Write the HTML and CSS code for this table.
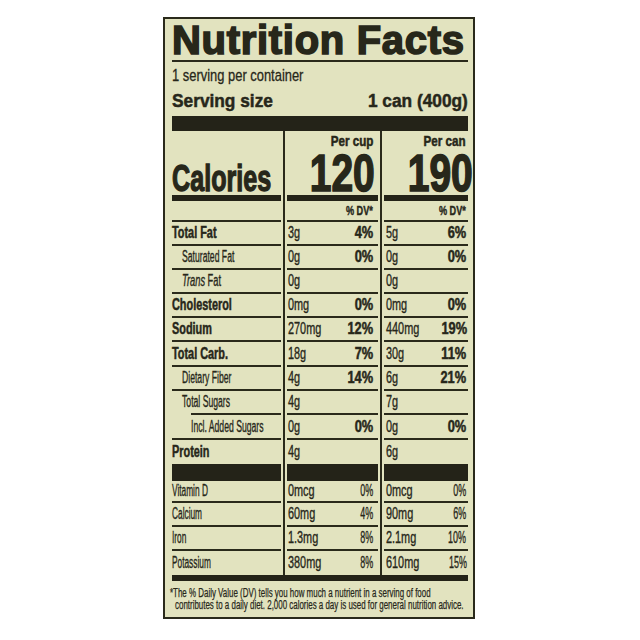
FILE: index.html
```html
<!DOCTYPE html>
<html lang="en">
<head>
<meta charset="utf-8">
<title>Nutrition Facts</title>
<link rel="stylesheet" href="styles.css">
</head>
<body>
<div class="page">
  <section class="label">
    <h1 class="title">Nutrition Facts</h1>
    <div class="servings"><span class="sx">1 serving per container</span></div>
    <div class="size"><span class="sx">Serving size</span><span class="sx r">1 can (400g)</span></div>
    <div class="bar-lg"></div>
    <div class="grid">
      <div class="vdiv d1"></div>
      <div class="vdiv d2"></div>

      <div class="cell cal"><span class="sx">Calories</span></div>
      <div class="cell head c2"><span class="sx r">Per cup</span></div>
      <div class="cell head c3"><span class="sx r">Per can</span></div>
      <div class="cell num c2"><span class="sx r">120</span></div>
      <div class="cell num c3"><span class="sx r">190</span></div>

      <div class="cell dv ln"></div>
      <div class="cell dv ln c2"><span class="sx r">% DV*</span></div>
      <div class="cell dv ln c3"><span class="sx r">% DV*</span></div>

      <div class="cell ln"><span class="sx lb">Total Fat</span></div>
      <div class="cell ln c2"><span class="sx v">3g</span><span class="sx r pb">4%</span></div>
      <div class="cell ln c3"><span class="sx v">5g</span><span class="sx r pb">6%</span></div>

      <div class="cell ln sub"><span class="sx lr">Saturated Fat</span></div>
      <div class="cell ln c2"><span class="sx v">0g</span><span class="sx r pb">0%</span></div>
      <div class="cell ln c3"><span class="sx v">0g</span><span class="sx r pb">0%</span></div>

      <div class="cell ln sub"><span class="sx lt"><i>Trans</i> Fat</span></div>
      <div class="cell ln c2"><span class="sx v">0g</span></div>
      <div class="cell ln c3"><span class="sx v">0g</span></div>

      <div class="cell ln"><span class="sx lb">Cholesterol</span></div>
      <div class="cell ln c2"><span class="sx v">0mg</span><span class="sx r pb">0%</span></div>
      <div class="cell ln c3"><span class="sx v">0mg</span><span class="sx r pb">0%</span></div>

      <div class="cell ln"><span class="sx lb">Sodium</span></div>
      <div class="cell ln c2"><span class="sx v">270mg</span><span class="sx r pb">12%</span></div>
      <div class="cell ln c3"><span class="sx v">440mg</span><span class="sx r pb">19%</span></div>

      <div class="cell ln"><span class="sx lb">Total Carb.</span></div>
      <div class="cell ln c2"><span class="sx v">18g</span><span class="sx r pb">7%</span></div>
      <div class="cell ln c3"><span class="sx v">30g</span><span class="sx r pb">11%</span></div>

      <div class="cell ln sub"><span class="sx lr">Dietary Fiber</span></div>
      <div class="cell ln c2"><span class="sx v">4g</span><span class="sx r pb">14%</span></div>
      <div class="cell ln c3"><span class="sx v">6g</span><span class="sx r pb">21%</span></div>

      <div class="cell sub ind-line"><span class="sx lr">Total Sugars</span></div>
      <div class="cell ln c2"><span class="sx v">4g</span></div>
      <div class="cell ln c3"><span class="sx v">7g</span></div>

      <div class="cell ln sub2"><span class="sx lr">Incl. Added Sugars</span></div>
      <div class="cell ln c2"><span class="sx v">0g</span><span class="sx r pb">0%</span></div>
      <div class="cell ln c3"><span class="sx v">0g</span><span class="sx r pb">0%</span></div>

      <div class="cell"><span class="sx lb">Protein</span></div>
      <div class="cell c2"><span class="sx v">4g</span></div>
      <div class="cell c3"><span class="sx v">6g</span></div>

      <div class="blk"></div>
      <div class="blk"></div>
      <div class="blk"></div>

      <div class="cell ln"><span class="sx vl">Vitamin D</span></div>
      <div class="cell ln c2"><span class="sx v">0mcg</span><span class="sx r pr">0%</span></div>
      <div class="cell ln c3"><span class="sx v">0mcg</span><span class="sx r pr">0%</span></div>

      <div class="cell ln"><span class="sx vl">Calcium</span></div>
      <div class="cell ln c2"><span class="sx v">60mg</span><span class="sx r pr">4%</span></div>
      <div class="cell ln c3"><span class="sx v">90mg</span><span class="sx r pr">6%</span></div>

      <div class="cell ln"><span class="sx vl">Iron</span></div>
      <div class="cell ln c2"><span class="sx v">1.3mg</span><span class="sx r pr">8%</span></div>
      <div class="cell ln c3"><span class="sx v">2.1mg</span><span class="sx r pr">10%</span></div>

      <div class="cell"><span class="sx vl">Potassium</span></div>
      <div class="cell c2"><span class="sx v">380mg</span><span class="sx r pr">8%</span></div>
      <div class="cell c3"><span class="sx v">610mg</span><span class="sx r pr">15%</span></div>
    </div>
    <div class="bar-sm"></div>
    <div class="foot">
      <div class="fl1"><span class="sx">*The % Daily Value (DV) tells you how much a nutrient in a serving of food</span></div>
      <div class="fl2"><span class="sx">contributes to a daily diet. 2,000 calories a day is used for general nutrition advice.</span></div>
    </div>
  </section>
</div>
</body>
</html>
```

FILE: styles.css
```css
* { box-sizing: border-box; margin: 0; padding: 0; }
html, body { background: #ffffff; }
body {
  font-family: "Liberation Sans", Arial, sans-serif;
  color: #27271a;
}
.page { padding: 17px 0 0 163px; }
.label {
  width: 312px;
  border: 2px solid #2a2a1b;
  background: #e2e3bf;
  padding: 0 5px 6px 7px;
}
.sx {
  display: inline-block;
  white-space: nowrap;
  transform: scaleX(var(--s, 1));
  transform-origin: left center;
  -webkit-text-stroke: var(--w, 0.35px) #27271a;
}
.sx.r { margin-left: auto; transform-origin: right center; }

.title {
  margin-top: 2px;
  font-size: 40px;
  line-height: 39px;
  font-weight: 700;
  letter-spacing: 0.7px;
  -webkit-text-stroke: 1.6px #27271a;
  white-space: nowrap;
  border-bottom: 2px solid #2a2a1b;
}
.servings {
  padding-top: 3px;
  font-size: 17px;
  line-height: 22px;
  --s: .76;
  --w: 0.3px;
}
.size {
  display: flex;
  padding-top: 3px;
  font-size: 19px;
  line-height: 22px;
  font-weight: 700;
  --s: .91;
  --w: 0.5px;
}
.bar-lg { margin-top: 4px; height: 15px; background: #242318; }
.bar-sm { height: 6px; background: #242318; }

.grid {
  display: grid;
  grid-template-columns: 109px 6px 91px 6px 84px;
  grid-template-rows: 20px 50px 21px 24px 24px 24px 24px 24px 25px 24px 24px 25px 24px 17px 22px 24px 24px 24px;
}
.vdiv { grid-row: 1 / -1; width: 2px; justify-self: center; background: #2a2a1b; }
.d1 { grid-column: 2; }
.d2 { grid-column: 4; }

.cell {
  display: flex;
  align-items: center;
  min-width: 0;
  font-size: 16px;
  line-height: 18px;
  white-space: nowrap;
}
.ln { border-bottom: 2px solid #2a2a1b; }
.c2 { padding: 0 5px 0 1px; }
.c3 { padding: 0 2px 0 2px; }
.sub { padding-left: 10px; }
.sub2 { padding-left: 19px; }
.ind-line {
  padding-bottom: 2px;
  background: linear-gradient(#2a2a1b, #2a2a1b) right bottom / calc(100% - 19px) 2px no-repeat;
}

.cal {
  grid-row: span 2;
  align-items: flex-end;
  font-size: 37px;
  line-height: 32px;
  font-weight: 700;
  border-bottom: 6px solid #242318;
  --s: .68;
  --w: 1.3px;
}
.head { font-size: 14px; line-height: 16px; font-weight: 700; --s: .83; --w: 0.5px; }
.num {
  font-size: 52px;
  line-height: 44px;
  font-weight: 700;
  border-bottom: 6px solid #242318;
  --s: .75;
  --w: 1.6px;
}
.dv { font-size: 12.5px; line-height: 14px; font-weight: 700; --s: .73; --w: 0.4px; }

.lb { font-weight: 700; --s: .68; --w: 0.5px; }
.lr { --s: .54; }
.lt { --s: .58; }
.vl { --s: .52; }
.v { --s: .68; }
.pb { font-weight: 700; --s: .8; --w: 0.5px; }
.pr { --s: .56; }

.blk { background: #242318; }

.foot {
  padding-top: 6px;
  font-size: 12.5px;
  line-height: 12px;
  --s: .635;
  --w: 0.25px;
}
.fl1 { margin-left: -2px; }
.fl2 { margin-left: 3px; }
```
